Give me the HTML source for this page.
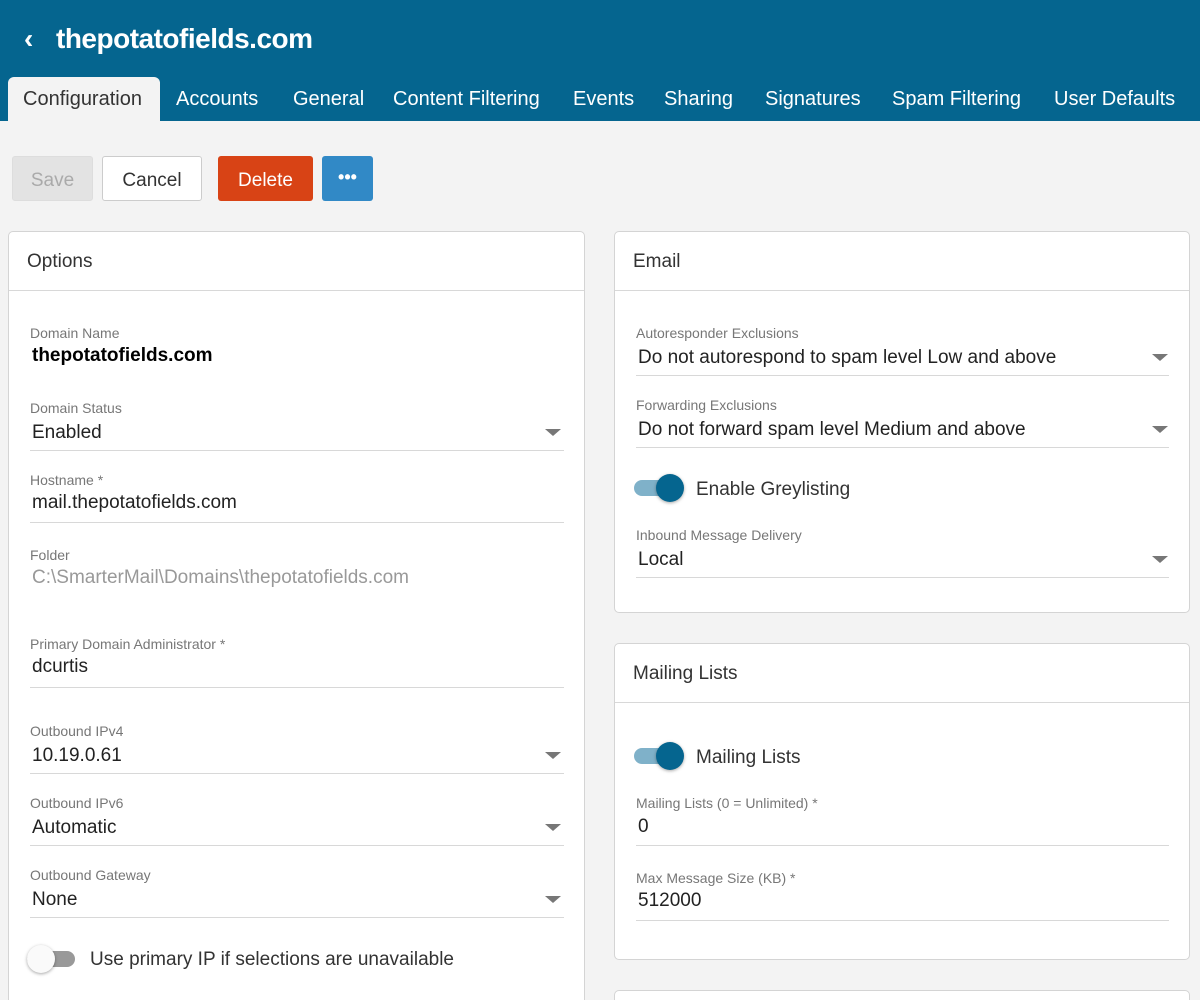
<!DOCTYPE html><html><head><style>
*{box-sizing:border-box;margin:0;padding:0}
html{width:1200px;height:1000px;overflow:hidden}
body{width:1200px;height:1000px;overflow:hidden;background:#f3f3f3;font-family:"Liberation Sans",sans-serif;position:relative;color:#222}
.hdr{position:absolute;left:0;top:0;width:1200px;height:121px;background:#05658f}
.a{position:absolute;white-space:nowrap}
.tab{position:absolute;top:88px;font-size:20px;color:#fff}
.panel{position:absolute;background:#fff;border:1px solid #d4d4d4;border-radius:5px}
.ph{position:absolute;left:0;right:0;top:0;height:59px;border-bottom:1px solid #d8d8d8;font-size:19px;padding:19px 0 0 18px;color:#333}
.lbl{position:absolute;font-size:14px;color:#777}
.val{position:absolute;font-size:19px;color:#222}
.ln{position:absolute;height:1px;background:#d8d8d8}
.car{position:absolute;width:0;height:0;border-left:8px solid transparent;border-right:8px solid transparent;border-top:7px solid #777}
.tg{position:absolute;width:50px;height:26px}
.tg .t{position:absolute;left:0;top:6px;width:48px;height:16px;border-radius:8px}
.tg .k{position:absolute;top:0;width:28px;height:28px;border-radius:50%;box-shadow:0 1px 3px rgba(0,0,0,.35)}
</style></head><body>
<div class="hdr"></div>
<div class="a" style="left:24px;top:23px;font-size:28px;color:#fff;font-weight:bold">‹</div>
<div class="a" style="left:56px;top:23px;font-size:28px;color:#fff;font-weight:bold;letter-spacing:-0.5px">thepotatofields.com</div>
<div class="a" style="left:8px;top:77px;width:152px;height:44px;background:#f3f3f3;border-radius:6px 6px 0 0"></div>
<div class="tab" style="left:23px;color:#333">Configuration</div>
<div class="tab" style="left:176px">Accounts</div>
<div class="tab" style="left:293px">General</div>
<div class="tab" style="left:393px">Content Filtering</div>
<div class="tab" style="left:573px">Events</div>
<div class="tab" style="left:664px">Sharing</div>
<div class="tab" style="left:765px">Signatures</div>
<div class="tab" style="left:892px">Spam Filtering</div>
<div class="tab" style="left:1054px">User Defaults</div>

<div class="a" style="left:12px;top:156px;width:81px;height:45px;background:#e3e3e3;border:1px solid #ddd;border-radius:3px;color:#aaa;font-size:19px;text-align:center;line-height:47px">Save</div>
<div class="a" style="left:102px;top:156px;width:100px;height:45px;background:#fff;border:1px solid #ccc;border-radius:3px;color:#333;font-size:19px;text-align:center;line-height:47px">Cancel</div>
<div class="a" style="left:218px;top:156px;width:95px;height:45px;background:#d84315;border-radius:3px;color:#fff;font-size:19px;text-align:center;line-height:49px">Delete</div>
<div class="a" style="left:322px;top:156px;width:51px;height:45px;background:#3189c6;border-radius:3px;color:#fff;font-size:18px;text-align:center;line-height:42px;font-weight:bold">•••</div>

<div class="panel" style="left:8px;top:231px;width:577px;height:800px">
<div class="ph">Options</div></div>
<div class="lbl" style="left:30px;top:325px">Domain Name</div>
<div class="val" style="left:32px;top:345px;color:#000;font-weight:bold">thepotatofields.com</div>
<div class="lbl" style="left:30px;top:400px">Domain Status</div>
<div class="val" style="left:32px;top:422px">Enabled</div><div class="car" style="left:545px;top:429px"></div><div class="ln" style="left:30px;top:450px;width:534px"></div>
<div class="lbl" style="left:30px;top:472px">Hostname *</div>
<div class="val" style="left:32px;top:492px">mail.thepotatofields.com</div><div class="ln" style="left:30px;top:522px;width:534px"></div>
<div class="lbl" style="left:30px;top:547px">Folder</div>
<div class="val" style="left:32px;top:567px;color:#999">C:\SmarterMail\Domains\thepotatofields.com</div>
<div class="lbl" style="left:30px;top:636px">Primary Domain Administrator *</div>
<div class="val" style="left:32px;top:656px">dcurtis</div><div class="ln" style="left:30px;top:687px;width:534px"></div>
<div class="lbl" style="left:30px;top:723px">Outbound IPv4</div>
<div class="val" style="left:32px;top:745px">10.19.0.61</div><div class="car" style="left:545px;top:752px"></div><div class="ln" style="left:30px;top:773px;width:534px"></div>
<div class="lbl" style="left:30px;top:795px">Outbound IPv6</div>
<div class="val" style="left:32px;top:817px">Automatic</div><div class="car" style="left:545px;top:824px"></div><div class="ln" style="left:30px;top:845px;width:534px"></div>
<div class="lbl" style="left:30px;top:867px">Outbound Gateway</div>
<div class="val" style="left:32px;top:889px">None</div><div class="car" style="left:545px;top:896px"></div><div class="ln" style="left:30px;top:917px;width:534px"></div>
<div class="tg" style="left:27px;top:945px"><div class="t" style="background:#999"></div><div class="k" style="left:0;background:#fafafa"></div></div>
<div class="val" style="left:90px;top:949px;color:#333">Use primary IP if selections are unavailable</div>

<div class="panel" style="left:614px;top:231px;width:576px;height:382px"><div class="ph">Email</div></div>
<div class="lbl" style="left:636px;top:325px">Autoresponder Exclusions</div>
<div class="val" style="left:638px;top:347px">Do not autorespond to spam level Low and above</div><div class="car" style="left:1152px;top:354px"></div><div class="ln" style="left:636px;top:375px;width:533px"></div>
<div class="lbl" style="left:636px;top:397px">Forwarding Exclusions</div>
<div class="val" style="left:638px;top:419px">Do not forward spam level Medium and above</div><div class="car" style="left:1152px;top:426px"></div><div class="ln" style="left:636px;top:447px;width:533px"></div>
<div class="tg" style="left:634px;top:474px"><div class="t" style="background:#7fb1c9"></div><div class="k" style="left:22px;background:#05658f"></div></div>
<div class="val" style="left:696px;top:479px;color:#333">Enable Greylisting</div>
<div class="lbl" style="left:636px;top:527px">Inbound Message Delivery</div>
<div class="val" style="left:638px;top:549px">Local</div><div class="car" style="left:1152px;top:556px"></div><div class="ln" style="left:636px;top:577px;width:533px"></div>

<div class="panel" style="left:614px;top:643px;width:576px;height:317px"><div class="ph">Mailing Lists</div></div>
<div class="tg" style="left:634px;top:742px"><div class="t" style="background:#7fb1c9"></div><div class="k" style="left:22px;background:#05658f"></div></div>
<div class="val" style="left:696px;top:747px;color:#333">Mailing Lists</div>
<div class="lbl" style="left:636px;top:795px">Mailing Lists (0 = Unlimited) *</div>
<div class="val" style="left:638px;top:816px">0</div><div class="ln" style="left:636px;top:845px;width:533px"></div>
<div class="lbl" style="left:636px;top:870px">Max Message Size (KB) *</div>
<div class="val" style="left:638px;top:890px">512000</div><div class="ln" style="left:636px;top:920px;width:533px"></div>
<div class="panel" style="left:614px;top:990px;width:576px;height:60px"></div>
</body></html>
